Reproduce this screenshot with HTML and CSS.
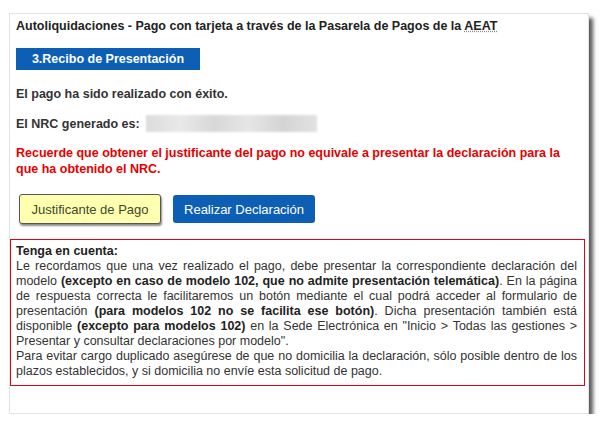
FILE: index.html
```html
<!DOCTYPE html>
<html lang="es">
<head>
    <meta charset="UTF-8">
    <title>Autoliquidaciones - Pago con tarjeta</title>
    <link rel="stylesheet" href="styles.css">
</head>
<body>
    <div class="panel">
        <h1 class="title">Autoliquidaciones - Pago con tarjeta a través de la Pasarela de Pagos de la <abbr title="Agencia Estatal de Administración Tributaria">AEAT</abbr></h1>

        <div class="step-bar">3.Recibo de Presentación</div>

        <p class="msg">El pago ha sido realizado con éxito.</p>

        <div class="nrc">
            <span>El NRC generado es:</span>
            <span class="nrc-value"></span>
        </div>

        <p class="warning">Recuerde que obtener el justificante del pago no equivale a presentar la declaración para la que ha obtenido el NRC.</p>

        <div class="actions">
            <button class="btn btn-receipt">Justificante de Pago</button>
            <button class="btn btn-declare">Realizar Declaración</button>
        </div>

        <div class="notice">
            <strong class="notice-head">Tenga en cuenta:</strong>
            <p>Le recordamos que una vez realizado el pago, debe presentar la correspondiente declaración del modelo <b>(excepto en caso de modelo 102, que no admite presentación telemática)</b>. En la página de respuesta correcta le facilitaremos un botón mediante el cual podrá acceder al formulario de presentación <b>(para modelos 102 no se facilita ese botón)</b>. Dicha presentación también está disponible <b>(excepto para modelos 102)</b> en la Sede Electrónica en "Inicio &gt; Todas las gestiones &gt; Presentar y consultar declaraciones por modelo".</p>
            <p>Para evitar cargo duplicado asegúrese de que no domicilia la declaración, sólo posible dentro de los plazos establecidos, y si domicilia no envíe esta solicitud de pago.</p>
        </div>
    </div>
</body>
</html>
```

FILE: styles.css
```css
* {
    margin: 0;
    padding: 0;
    box-sizing: border-box;
}

body {
    background: #fff;
    font-family: 'Liberation Sans', Arial, sans-serif;
    font-size: 12.5px;
    color: #333;
    overflow: hidden;
}

.panel {
    width: 580px;
    height: 401px;
    margin: 13px 0 0 9px;
    padding: 5px 3px 0 0;
    background: #fff;
    border: 1px solid #e4e4e4;
    box-shadow: 4px 5px 4px rgba(0, 0, 0, 0.65);
}

.title {
    font-size: 12.5px;
    font-weight: bold;
    line-height: 15px;
    color: #222;
    padding-left: 6px;
}

.title abbr {
    text-decoration: underline dotted #888;
}

.step-bar {
    width: 184px;
    height: 22px;
    margin: 14px 0 0 6px;
    background: #0d5fb5;
    color: #fff;
    font-weight: bold;
    line-height: 22px;
    text-align: center;
}

.msg {
    margin: 17px 0 0 6px;
    font-weight: bold;
    line-height: 15px;
}

.nrc {
    display: flex;
    align-items: center;
    gap: 6px;
    margin: 13px 0 0 6px;
    font-weight: bold;
}

.nrc-value {
    width: 171px;
    height: 17px;
    background: linear-gradient(90deg, #dcdcdc, #e9e9e9 20%, #d8d8d8 40%, #e6e6e6 60%, #d4d4d4 80%, #e2e2e2);
    filter: blur(1px);
}

.warning {
    margin: 13px 0 0 6px;
    padding-right: 10px;
    color: #e60000;
    font-weight: bold;
    line-height: 16px;
}

.actions {
    display: flex;
    align-items: center;
    gap: 12px;
    margin: 17px 0 0 9px;
}

.btn {
    width: 142px;
    font-family: inherit;
    font-size: 13px;
    border-radius: 3px;
    cursor: pointer;
}

.btn-receipt {
    height: 30px;
    background: #ffffb0;
    color: #3c4a2c;
    border: 1px solid #555;
    box-shadow: 1px 2px 2px rgba(0, 0, 0, 0.45);
}

.btn-declare {
    height: 28px;
    background: #0d5fb5;
    color: #fff;
    border: none;
}

.notice {
    margin: 15px 0 0 0;
    padding: 4px 7px 6px 5px;
    border: 1.5px solid #e2001a;
    line-height: 15px;
    text-align: justify;
}

.notice-head {
    display: block;
    color: #222;
}

.notice b {
    color: #222;
}
```
